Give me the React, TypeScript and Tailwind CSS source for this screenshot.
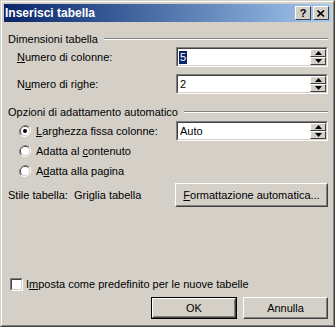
const FONT = { fontFamily: '"Liberation Sans", Arial, sans-serif' };

function Spin() {
  return (
    <div className="flex flex-col w-[16px] h-full">
      {[0, 1].map((i) => (
        <div
          key={i}
          className="flex-1 bg-[#d4d0c8] border border-t-white border-l-white border-r-[#404040] border-b-[#404040] flex items-center justify-center"
        >
          <svg width="7" height="4" viewBox="0 0 7 4">
            {i === 0 ? (
              <polygon points="3.5,0 7,4 0,4" fill="#000" />
            ) : (
              <polygon points="0,0 7,0 3.5,4" fill="#000" />
            )}
          </svg>
        </div>
      ))}
    </div>
  );
}

function SpinEdit({ value, selected }: { value: string; selected?: boolean }) {
  return (
    <div className="ml-auto w-[152px] h-full border border-t-[#808080] border-l-[#808080] border-r-white border-b-white">
      <div className="h-full bg-white border border-t-[#404040] border-l-[#404040] border-r-[#d4d0c8] border-b-[#d4d0c8] flex items-stretch">
        <div className="flex-1 flex items-center pl-[1px]">
          <span
            className={
              selected ? 'bg-[#0a246a] text-white px-[1px] leading-[13px]' : 'text-black px-[1px]'
            }
          >
            {value}
          </span>
        </div>
        <Spin />
      </div>
    </div>
  );
}

function Button({
  children,
  width,
  isDefault,
}: {
  children: React.ReactNode;
  width: string;
  isDefault?: boolean;
}) {
  return (
    <div className={`${width} h-full ${isDefault ? 'border border-black' : ''}`}>
      <div className="h-full border border-t-white border-l-white border-r-[#404040] border-b-[#404040]">
        <div className="h-full border border-t-[#d4d0c8] border-l-[#d4d0c8] border-r-[#808080] border-b-[#808080] flex items-center justify-center text-black">
          {children}
        </div>
      </div>
    </div>
  );
}

function Radio({ checked }: { checked?: boolean }) {
  return (
    <svg width="12" height="12" viewBox="0 0 12 12" className="shrink-0">
      <path d="M10.2 1.8 A6 6 0 0 0 1.8 10.2" fill="none" stroke="#808080" strokeWidth="1" />
      <path d="M1.8 10.2 A6 6 0 0 0 10.2 1.8" fill="none" stroke="#ffffff" strokeWidth="1" />
      <circle cx="6" cy="6" r="5.5" fill="none" stroke="transparent" />
      <path d="M9.5 2.5 A5 5 0 0 0 2.5 9.5" fill="none" stroke="#404040" strokeWidth="1" />
      <path d="M2.5 9.5 A5 5 0 0 0 9.5 2.5" fill="none" stroke="#d4d0c8" strokeWidth="1" />
      <circle cx="6" cy="6" r="4" fill="#fff" />
      {checked && <circle cx="6" cy="6" r="2" fill="#000" />}
    </svg>
  );
}

function GroupHeader({ label }: { label: string }) {
  return (
    <div className="flex items-center h-[14px]">
      <span>{label}</span>
      <div className="flex-1 ml-[6px] border-t border-t-[#808080] border-b border-b-white" />
    </div>
  );
}

export default function App() {
  return (
    <div
      style={FONT}
      className="w-[335px] h-[327px] bg-[#d4d0c8] text-[11px] text-black border border-t-[#d4d0c8] border-l-[#d4d0c8] border-r-[#404040] border-b-[#404040]"
    >
      <div className="h-full border border-t-white border-l-white border-r-[#808080] border-b-[#808080] p-[2px] flex flex-col">
        {/* Title bar */}
        <div className="h-[18px] shrink-0 flex items-center bg-gradient-to-r from-[#0a246a] to-[#a6caf0] pl-[1px] pr-[2px]">
          <span className="text-white font-bold text-[12px] flex-1">Inserisci tabella</span>
          <div className="flex gap-[2px]">
            <div className="w-[16px] h-[14px] bg-[#d4d0c8] border border-t-white border-l-white border-r-[#404040] border-b-[#404040] flex items-center justify-center font-bold text-[11px] leading-none">
              ?
            </div>
            <div className="w-[16px] h-[14px] bg-[#d4d0c8] border border-t-white border-l-white border-r-[#404040] border-b-[#404040] flex items-center justify-center">
              <svg width="8" height="7" viewBox="0 0 8 7">
                <path d="M0.5 0.5 L7 6.5 M7 0.5 L0.5 6.5" stroke="#000" strokeWidth="1.6" />
              </svg>
            </div>
          </div>
        </div>

        {/* Body */}
        <div className="flex-1 flex flex-col pl-[4px] pr-[3px]">
          <div className="mt-[10px]">
            <GroupHeader label="Dimensioni tabella" />
          </div>

          <div className="mt-[1px] h-[20px] flex items-center">
            <span className="pl-[9px]">
              <u>N</u>umero di colonne:
            </span>
            <SpinEdit value="5" selected />
          </div>

          <div className="mt-[7px] h-[20px] flex items-center">
            <span className="pl-[9px]">
              N<u>u</u>mero di righe:
            </span>
            <SpinEdit value="2" />
          </div>

          <div className="mt-[11px]">
            <GroupHeader label="Opzioni di adattamento automatico" />
          </div>

          <div className="mt-[2px] h-[20px] flex items-center">
            <div className="pl-[11px] flex items-center gap-[5px]">
              <Radio checked />
              <span>
                <u>L</u>arghezza fissa colonne:
              </span>
            </div>
            <SpinEdit value="Auto" />
          </div>

          <div className="h-[20px] flex items-center pl-[11px] gap-[5px]">
            <Radio />
            <span>
              Adatta al <u>c</u>ontenuto
            </span>
          </div>

          <div className="h-[20px] flex items-center pl-[11px] gap-[5px]">
            <Radio />
            <span>
              A<u>d</u>atta alla pagina
            </span>
          </div>

          <div className="mt-[2px] h-[24px] flex items-center">
            <span className="whitespace-pre">Stile tabella:  Griglia tabella</span>
            <div className="ml-auto h-full">
              <Button width="w-[153px]">
                <span>
                  <u>F</u>ormattazione automatica...
                </span>
              </Button>
            </div>
          </div>

          <div className="mt-[70px] h-[14px] flex items-center gap-[3px] pl-[2px]">
            <div className="w-[13px] h-[13px] border border-t-[#808080] border-l-[#808080] border-r-white border-b-white">
              <div className="w-full h-full bg-white border border-t-[#404040] border-l-[#404040] border-r-[#d4d0c8] border-b-[#d4d0c8]" />
            </div>
            <span>
              I<u>m</u>posta come predefinito per le nuove tabelle
            </span>
          </div>

          <div className="mt-[6px] h-[22px] flex justify-end gap-[6px] pr-[0px]">
            <Button width="w-[86px]" isDefault>
              OK
            </Button>
            <Button width="w-[85px]">Annulla</Button>
          </div>
        </div>
      </div>
    </div>
  );
}
